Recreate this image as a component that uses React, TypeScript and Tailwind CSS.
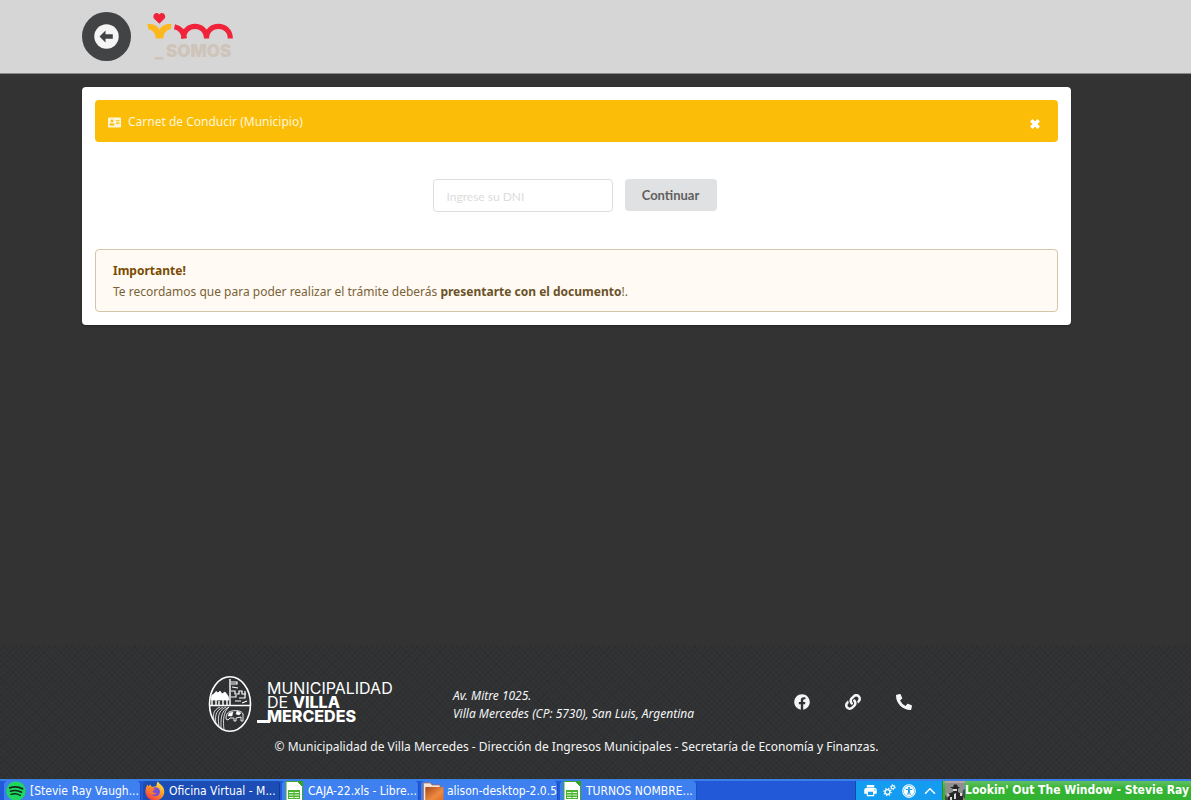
import { useState } from "react";
import type { ReactNode } from "react";
import { FaAddressCard, FaFacebook, FaLink, FaPhoneAlt, FaUniversalAccess } from "react-icons/fa";
import { MdPrint } from "react-icons/md";
import { ChevronUp } from "lucide-react";

function BackIcon() {
  return (
    <svg width="25" height="25" viewBox="-12.5 -12.5 25 25" aria-hidden="true">
      <circle r="12.200" fill="#f5f5f5" />
      <path d="M-7 0 L-1 -6 V-2.200 H6.300 V2.200 H-1 V6 Z" fill="#414345" />
    </svg>
  );
}

function CloseIcon() {
  return (
    <svg width="12" height="12" viewBox="0 0 12 12" aria-hidden="true">
      <path d="M2.300 2.300 L9.700 9.700 M9.700 2.300 L2.300 9.700" stroke="#fff" strokeWidth="3.600" />
    </svg>
  );
}

function SomosLogo() {
  return (
    <svg width="88" height="52" viewBox="0 0 88 52" role="img" aria-label="Somos">
      <path
        d="M12.300 12.800 L7 7.600 C4.800 4.600 9 -0.200 12.300 3.400 C15.600 -0.200 19.800 4.600 17.600 7.600 Z"
        fill="#f0233a"
      />
      <path
        d="M0.300 13 C6 12.500 10.500 14.500 12.500 18.500 C14.500 14.500 19 12.500 24.700 13 L23.500 18.500 C19.500 19 16.500 22 16.300 27.500 H8.700 C8.500 22 5.500 19 1.500 18.500 Z"
        fill="#fdb81e"
      />
      <path
        d="M27.500 15.800 C33.500 17 36.500 21 37.500 27.500 M36.500 27.500 C36.500 11.200 59.500 11.200 59.500 27.500 C59.500 11.200 83.300 11.200 83.300 27.500"
        fill="none"
        stroke="#f0233a"
        strokeWidth="5.200"
      />
      <text y="46" fill="#cfc4b9" fontFamily="Inter, sans-serif" fontWeight="900" fontSize="17">
        <tspan x="8">_</tspan>
        <tspan x="19">SOMOS</tspan>
      </text>
    </svg>
  );
}

function CityShield() {
  return (
    <svg width="44" height="58" viewBox="0 0 44 58" fill="none" stroke="#fff" aria-hidden="true">
      <ellipse cx="22" cy="29" rx="20.500" ry="27.300" strokeWidth="1.600" />
      <path d="M2 30.500 H42 M22 4 V31" strokeWidth="1.400" />
      <path
        d="M3 24 L4 20 L6 19 L8 16.500 L10 18 L12 16 L14 19 L17 17 L20 21 L21 25 L3 25 Z"
        fill="#fff"
        strokeWidth="0.800"
      />
      <path d="M4 25 V31 M8 25 V31 M11 26 V31 M15 25 V31 M19 25 V31" strokeWidth="1.400" />
      <path
        d="M23 7 H29 V9 H23 M23 16 H27 V19 H31 V16 H34 V19 H38 M23 22 H28 V20 M31 23 H37 V16 M24 12 L30 13 M27 26 H33 M34 28 L39 26"
        strokeWidth="1.200"
      />
      <path
        d="M21 32 C12 36 13 45 13 54 M18 32 C9 36 10 44 11 52 M15 32 C7 36 7 42 8 49 M12 32 C5 35 5 40 6 45 M21 32 C15 37 15 46 16 55"
        strokeWidth="0.800"
      />
      <path
        d="M18 44 C18 38 20 37 24 36 C29 35 34 36 35 39 V46 H33 V42 L28 43 V46 H26 V43 L22 43 L20 45 Z"
        strokeWidth="0.900"
      />
      <path d="M21 38 L25 37 L24 41 L20 41 Z M29 36 L33 38 L31 40 L28 39 Z" fill="#fff" strokeWidth="0.500" />
    </svg>
  );
}

function SpotifyIcon() {
  return (
    <svg width="20" height="20" viewBox="0 0 20 20" className="shrink-0" aria-hidden="true">
      <circle cx="10" cy="10" r="9.700" fill="#1ed760" />
      <g fill="none" stroke="#10291a" strokeLinecap="round">
        <path d="M3.800 6.800 C8 5.400 13 5.800 16.500 7.800" strokeWidth="1.900" />
        <path d="M4.500 10.200 C8.500 9 12.500 9.400 15.500 11.200" strokeWidth="1.600" />
        <path d="M5 13.300 C8.500 12.300 11.500 12.700 14.300 14.300" strokeWidth="1.400" />
      </g>
    </svg>
  );
}

function FirefoxIcon() {
  return (
    <svg width="20" height="20" viewBox="0 0 20 20" className="shrink-0" aria-hidden="true">
      <defs>
        <linearGradient id="fox" x1="0.800" y1="0" x2="0.200" y2="1">
          <stop offset="0" stopColor="#fff14a" />
          <stop offset="0.450" stopColor="#ff9a26" />
          <stop offset="1" stopColor="#f5304a" />
        </linearGradient>
      </defs>
      <path
        d="M13 0.500 C14 3 17 4 18.500 7 C21 13 17 19.500 10 19.500 C4 19.500 0.300 15 0.500 10 C0.600 7 1.500 5 2.500 3.500 L3.500 5.500 L5 3.500 L7 6 L11.500 5 C11.500 3 12 1.500 13 0.500 Z"
        fill="url(#fox)"
      />
      <circle cx="10.500" cy="10.800" r="4.500" fill="#7551d8" />
      <path d="M4 7 C6 6 9 7 10 8.500 L7.500 10 C8 12 10 12.500 12 12 C9 15 5 13 4 10 Z" fill="#ff7a28" />
    </svg>
  );
}

function SheetIcon() {
  return (
    <svg width="18" height="20" viewBox="0 0 18 20" className="shrink-0" aria-hidden="true">
      <path d="M1 0.500 H12.500 L17.500 5.500 V20 H1 Z" fill="#fff" stroke="#43a62c" />
      <path d="M12.500 0 H18 V6 Z" fill="#36a51c" />
      <path d="M3 9 H15 V18 H3 Z" fill="#4cb431" />
      <path d="M4 11.500 H8.500 M9.500 11.500 H14 M4 14 H8.500 M9.500 14 H14 M4 16.500 H8.500 M9.500 16.500 H14" stroke="#e4f8dc" />
    </svg>
  );
}

function FolderIcon() {
  return (
    <svg width="21" height="20" viewBox="0 0 21 20" className="shrink-0" aria-hidden="true">
      <defs>
        <linearGradient id="folder" x1="0" y1="0" x2="1" y2="1">
          <stop offset="0" stopColor="#a8481c" />
          <stop offset="0.600" stopColor="#ee8a3f" />
          <stop offset="1" stopColor="#e0691d" />
        </linearGradient>
      </defs>
      <path d="M0.500 20 V2 H7.500 L9 4 H17 V7 H3 V20 Z" fill="#f5e3d8" stroke="#b5694b" strokeWidth="0.700" />
      <path d="M2.500 6 H20.500 V20 H2.500 Z" fill="url(#folder)" />
    </svg>
  );
}

function GearsIcon() {
  return (
    <svg width="13" height="13" viewBox="0 0 13 13" fill="none" stroke="#fff" aria-hidden="true">
      <circle cx="4.500" cy="8" r="2.400" strokeWidth="1.300" />
      <circle cx="4.500" cy="8" r="3.600" strokeWidth="1.200" strokeDasharray="1.400 1.430" />
      <circle cx="9.800" cy="3.200" r="1.600" strokeWidth="1.100" />
      <circle cx="9.800" cy="3.200" r="2.500" strokeWidth="1" strokeDasharray="1.100 1.520" />
    </svg>
  );
}

function AlbumCover() {
  return (
    <svg width="20" height="20" viewBox="0 0 20 20" className="shrink-0" aria-hidden="true">
      <path d="M0 0 H20 V20 H0 Z" fill="#8f8f8f" />
      <path d="M0 0 H20 V2 H0 Z" fill="#b9a4a0" />
      <path d="M5 6 H8 L9 3.500 H12 L13 6 H15 L13 8 V11 L18 14 V20 H3 V13 L8 11 V8 Z" fill="#262626" />
      <path d="M8 8 H12 V10 H8 Z M2 12 L5 14 L3 16 Z M9 13 L11 12 V18 H9 Z M15 12 H18 V15 H15 Z M5 16 H7 V19 H5 Z" fill="#d8d8d8" />
      <path d="M0 14 L3 17 V20 H0 Z M18 9 L20 8 V18 L17 15 Z" fill="#4a4a4a" />
    </svg>
  );
}

interface Task {
  title: string;
  icon: ReactNode;
  active?: boolean;
}

const TASKS: Task[] = [
  { title: "[Stevie Ray Vaugh...", icon: <SpotifyIcon /> },
  { title: "Oficina Virtual - M...", icon: <FirefoxIcon />, active: true },
  { title: "CAJA-22.xls - Libre...", icon: <SheetIcon /> },
  { title: "alison-desktop-2.0.5", icon: <FolderIcon /> },
  { title: "TURNOS NOMBRE...", icon: <SheetIcon /> },
];

function Taskbar() {
  return (
    <nav
      aria-label="Ventanas"
      className="flex h-[21px] shrink-0 overflow-hidden border-t-2 border-[#3a80e8] bg-[#2259d8] font-['DejaVu_Sans_Condensed','DejaVu_Sans',sans-serif] text-[12px] text-white"
    >
      <div className="flex min-w-0 flex-1 gap-[2px] pl-1">
        {TASKS.map((task) => (
          <button
            key={task.title}
            type="button"
            className={`flex h-6 w-[137px] items-start gap-1 overflow-hidden rounded-t-sm border-r pl-[2px] text-left whitespace-nowrap ${
              task.active ? "border-[#123a94] bg-[#1b4db5]" : "border-[#1c4fc0] bg-[#3e80f0]"
            }`}
          >
            <span className="flex w-5 justify-center">{task.icon}</span>
            <span className="leading-5">{task.title}</span>
          </button>
        ))}
      </div>

      {/* System tray */}
      <div className="flex w-[87px] items-center justify-around border-l border-[#0b4fa0] bg-[#149cf0] pl-1">
        <MdPrint size={15} />
        <GearsIcon />
        <FaUniversalAccess size={14} />
        <ChevronUp size={18} />
      </div>

      {/* Now playing */}
      <div className="flex w-[249px] overflow-hidden border-l border-[#2f8a38] bg-linear-to-b from-[#62c062] to-[#32b332] to-40% pl-[2px] whitespace-nowrap">
        <AlbumCover />
        <span className="leading-[18px] font-bold">Lookin' Out The Window - Stevie Ray V</span>
      </div>
    </nav>
  );
}

export default function App() {
  const [dni, setDni] = useState("");

  return (
    <div className="flex min-h-screen flex-col bg-[#333333] font-['Noto_Sans',sans-serif] text-[12px]">
      <header className="flex h-[74px] items-center gap-4 border-b border-[#8a8a8a] bg-[#d6d6d6] pr-[120px] pl-[82px]">
        <button
          type="button"
          aria-label="Volver"
          className="flex size-[49px] items-center justify-center rounded-full bg-[#414345]"
        >
          <BackIcon />
        </button>
        <SomosLogo />
      </header>

      <main className="flex-1 pt-[13px] pr-[120px] pl-[82px]">
        <section className="rounded bg-white p-[13px] shadow-[0_1px_2px_rgba(0,0,0,0.3)]">
          <div className="flex h-[42px] items-center rounded bg-[#fbbd08] pt-[2px] pr-[17px] pl-[13px] text-[#fff6da]">
            <FaAddressCard size={13} />
            <h1 className="ml-[7px] flex-1">Carnet de Conducir (Municipio)</h1>
            <button type="button" aria-label="Cerrar" className="pt-1">
              <CloseIcon />
            </button>
          </div>

          <form
            onSubmit={(e) => e.preventDefault()}
            className="my-[37px] flex items-start justify-center gap-3 pr-1 font-['Lato',sans-serif]"
          >
            <input
              type="text"
              aria-label="DNI"
              placeholder="Ingrese su DNI"
              value={dni}
              onChange={(e) => setDni(e.target.value)}
              className="h-[33px] w-[180px] rounded border border-[#dededf] px-[13px] pt-px text-[12px] text-[#333] placeholder:text-[#dcdcdc]"
            />
            <button
              type="submit"
              className="h-8 w-[92px] rounded bg-[#e0e1e2] pt-px text-[13px] font-bold text-[#5f5f60]"
            >
              Continuar
            </button>
          </form>

          <div className="rounded border border-[#d3c6a8] bg-[#fffaf3] px-[17px] pt-3 pb-[9px] text-[#7a6238]">
            <h2 className="leading-[18px] font-bold text-[#794b02]">Importante!</h2>
            <p className="mt-[2px] leading-5">
              Te recordamos que para poder realizar el trámite deberás{" "}
              <b className="text-[#6b5228]">presentarte con el documento</b>!.
            </p>
          </div>
        </section>
      </main>

      <footer className="bg-[#313335] bg-[repeating-linear-gradient(45deg,rgba(0,0,0,0.07)_0_1px,transparent_1px_4px),repeating-linear-gradient(135deg,rgba(0,0,0,0.07)_0_1px,transparent_1px_4px)] pt-[30px] pr-[120px] pb-[22px] pl-[82px] text-[#f5f5f5]">
        <div className="grid grid-cols-[245fr_341fr_277fr] items-center pl-[126px]">
          <div className="flex items-start">
            <CityShield />
            <div className="ml-[5px] flex items-end pt-[6px] font-['Inter',sans-serif] text-[16px] leading-[14px] text-white">
              <span className="h-[3px] w-[13px] bg-white" />
              <p className="-ml-[3px]">
                MUNICIPALIDAD
                <br />
                DE <b className="font-extrabold">VILLA</b>
                <br />
                <b className="font-extrabold">MERCEDES</b>
              </p>
            </div>
          </div>
          <address className="pt-px leading-[18px]">
            Av. Mitre 1025.
            <br />
            Villa Mercedes (CP: 5730), San Luis, Argentina
          </address>
          <div className="flex gap-[35px] pb-1">
            <a href="#facebook" aria-label="Facebook">
              <FaFacebook size={16} />
            </a>
            <a href="#sitio" aria-label="Sitio web">
              <FaLink size={16} />
            </a>
            <a href="#telefono" aria-label="Teléfono">
              <FaPhoneAlt size={16} />
            </a>
          </div>
        </div>
        <p className="mt-1 text-center leading-5">
          © Municipalidad de Villa Mercedes - Dirección de Ingresos Municipales - Secretaría de Economía y Finanzas.
        </p>
      </footer>

      <Taskbar />
    </div>
  );
}
